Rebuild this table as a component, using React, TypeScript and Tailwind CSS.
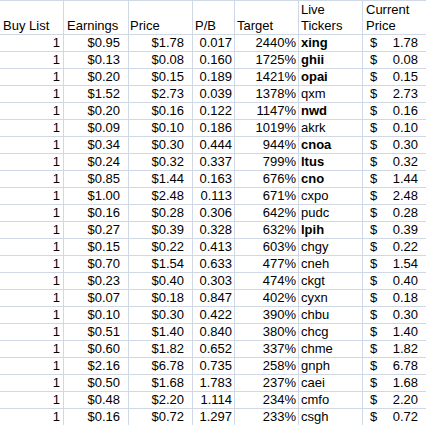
const rows: [string, string, string, string, string, boolean, string][] = [
  ['$0.95', '$1.78', '0.017', '2440%', 'xing', true, '1.78'],
  ['$0.13', '$0.08', '0.160', '1725%', 'ghii', true, '0.08'],
  ['$0.20', '$0.15', '0.189', '1421%', 'opai', true, '0.15'],
  ['$1.52', '$2.73', '0.039', '1378%', 'qxm', false, '2.73'],
  ['$0.20', '$0.16', '0.122', '1147%', 'nwd', true, '0.16'],
  ['$0.09', '$0.10', '0.186', '1019%', 'akrk', false, '0.10'],
  ['$0.34', '$0.30', '0.444', '944%', 'cnoa', true, '0.30'],
  ['$0.24', '$0.32', '0.337', '799%', 'ltus', true, '0.32'],
  ['$0.85', '$1.44', '0.163', '676%', 'cno', true, '1.44'],
  ['$1.00', '$2.48', '0.113', '671%', 'cxpo', false, '2.48'],
  ['$0.16', '$0.28', '0.306', '642%', 'pudc', false, '0.28'],
  ['$0.27', '$0.39', '0.328', '632%', 'lpih', true, '0.39'],
  ['$0.15', '$0.22', '0.413', '603%', 'chgy', false, '0.22'],
  ['$0.70', '$1.54', '0.633', '477%', 'cneh', false, '1.54'],
  ['$0.23', '$0.40', '0.303', '474%', 'ckgt', false, '0.40'],
  ['$0.07', '$0.18', '0.847', '402%', 'cyxn', false, '0.18'],
  ['$0.10', '$0.30', '0.422', '390%', 'chbu', false, '0.30'],
  ['$0.51', '$1.40', '0.840', '380%', 'chcg', false, '1.40'],
  ['$0.60', '$1.82', '0.652', '337%', 'chme', false, '1.82'],
  ['$2.16', '$6.78', '0.735', '258%', 'gnph', false, '6.78'],
  ['$0.50', '$1.68', '1.783', '237%', 'caei', false, '1.68'],
  ['$0.48', '$2.20', '1.114', '234%', 'cmfo', false, '2.20'],
  ['$0.16', '$0.72', '1.297', '233%', 'csgh', false, '0.72'],
]

const cols = 'grid grid-cols-[64px_65px_64px_42px_64px_64px_1fr]'
const cell = 'border-r border-[#d0d7e5]'

export default function App() {
  return (
    <div
      className="w-[426px] h-[425px] overflow-hidden bg-white text-black text-[13px] leading-[16px]"
      style={{ fontFamily: '"Liberation Sans", Arial, sans-serif' }}
    >
      <div className={`${cols} h-[35px] border-t border-b border-[#d0d7e5]`}>
        <div className={`${cell} flex items-end pl-[3px]`}>Buy List</div>
        <div className={`${cell} flex items-end pl-[3px]`}>Earnings</div>
        <div className={`${cell} flex items-end pl-[1px]`}>Price</div>
        <div className={`${cell} flex items-end pl-[2px]`}>P/B</div>
        <div className={`${cell} flex items-end pl-[2px]`}>Target</div>
        <div className={`${cell} flex items-end pl-[2px]`}>
          <span>Live<br />Tickers</span>
        </div>
        <div className="flex items-end pl-[3px]">
          <span>Current<br />Price</span>
        </div>
      </div>
      {rows.map(([earn, price, pb, target, tick, bold, cur], i) => (
        <div key={i} className={`${cols} h-[17px] border-b border-[#d0d7e5]`}>
          <div className={`${cell} text-right pr-[3px]`}>1</div>
          <div className={`${cell} text-right pr-[8px]`}>{earn}</div>
          <div className={`${cell} text-right pr-[8px]`}>{price}</div>
          <div className={`${cell} text-right pr-[2px]`}>{pb}</div>
          <div className={`${cell} text-right pr-[2px]`}>{target}</div>
          <div className={`${cell} pl-[2px] ${bold ? 'font-bold' : ''}`}>{tick}</div>
          <div className="flex justify-between pl-[7px] pr-[8px]">
            <span>$</span>
            <span>{cur}</span>
          </div>
        </div>
      ))}
    </div>
  )
}
